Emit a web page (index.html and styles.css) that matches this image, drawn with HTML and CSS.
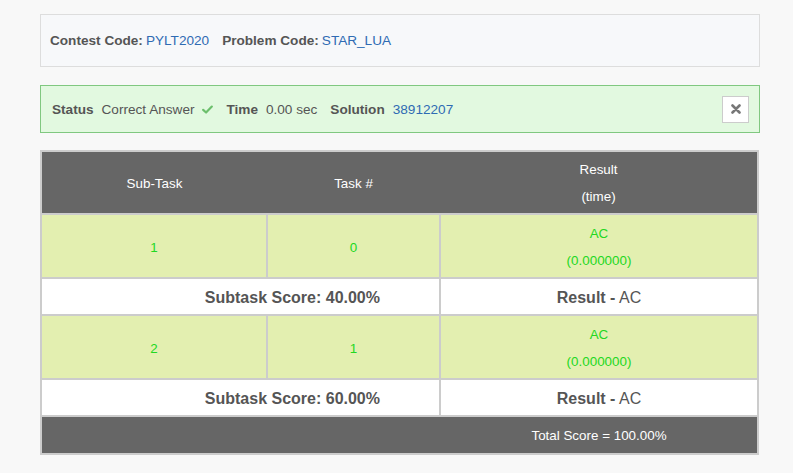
FILE: index.html
```html
<!DOCTYPE html>
<html>
<head>
<meta charset="utf-8">
<link rel="stylesheet" href="styles.css">
</head>
<body>
<div class="page">
  <div class="info-box">
    <span class="label">Contest Code:</span> <a class="val">PYLT2020</a>
    <span class="label gap">Problem Code:</span> <a class="val">STAR_LUA</a>
  </div>
  <div class="status-box">
    <div class="status-text">
      <span class="label">Status</span>
      <span class="plain">Correct Answer</span>
      <svg class="check" width="11" height="9" viewBox="0 0 12 10"><path d="M1.2 5.4 L4.4 8.4 L10.8 1.8" fill="none" stroke="#6cbf6c" stroke-width="2.4" stroke-linecap="round" stroke-linejoin="round"/></svg>
      <span class="label gap">Time</span>
      <span class="plain">0.00 sec</span>
      <span class="label gap">Solution</span>
      <a class="val">38912207</a>
    </div>
    <button class="close" type="button">
      <svg width="10" height="10" viewBox="0 0 10 10"><path d="M1.5 1.5 L8.5 8.5 M8.5 1.5 L1.5 8.5" stroke="#777" stroke-width="2.6" stroke-linecap="round"/></svg>
    </button>
  </div>
  <table class="results">
    <colgroup>
      <col class="c1"><col class="c2"><col class="c3">
    </colgroup>
    <thead>
      <tr><th>Sub-Task</th><th>Task #</th><th>Result<br>(time)</th></tr>
    </thead>
    <tbody>
      <tr class="task"><td>1</td><td>0</td><td>AC<br>(0.000000)</td></tr>
      <tr class="sub"><td colspan="2" class="score">Subtask Score: 40.00%</td><td><b>Result -</b> AC</td></tr>
      <tr class="task"><td>2</td><td>1</td><td>AC<br>(0.000000)</td></tr>
      <tr class="sub"><td colspan="2" class="score">Subtask Score: 60.00%</td><td><b>Result -</b> AC</td></tr>
      <tr class="total"><td colspan="2" class="blank"></td><td>Total Score = 100.00%</td></tr>
    </tbody>
  </table>
</div>
</body>
</html>
```
FILE: styles.css
```css
html, body {
  margin: 0;
  background: #f8f8f8;
}
body {
  font-family: "Liberation Sans", Arial, sans-serif;
  font-size: 13.6px;
  color: #555;
}
.page {
  width: 720px;
  padding: 14px 0 0 40px;
}
.info-box {
  height: 51px;
  border: 1px solid #ddd;
  background: #f7f8fa;
  padding: 0 9px;
  display: flex;
  align-items: center;
  gap: 3px;
}
.label {
  font-weight: bold;
  color: #555;
}
.gap {
  margin-left: 10px;
}
.val {
  color: #2f6bb3;
}
.plain {
  color: #555;
}
.status-box {
  margin-top: 18px;
  height: 46px;
  border: 1px solid #80c880;
  background: #e2f9e0;
  display: flex;
  align-items: center;
  justify-content: space-between;
  padding: 0 10px 0 11px;
}
.status-text {
  display: flex;
  align-items: center;
  gap: 8px;
}
.status-text .gap {
  margin-left: 5px;
}
.check {
  margin-left: 0;
}
.close {
  width: 27px;
  height: 27px;
  border: 1px solid #ccc;
  background: #fff;
  padding: 0;
  display: flex;
  align-items: center;
  justify-content: center;
}
.results {
  margin-top: 17px;
  width: 719px;
  border-collapse: collapse;
  border: 2px solid #ccc;
  text-align: center;
  line-height: 27px;
  font-size: 13.4px;
}
.c1 { width: 226px; }
.c2 { width: 173px; }
.results td {
  border: 2px solid #ccc;
}
.results th {
  background: #666;
  color: #fff;
  font-weight: normal;
  padding: 4px 4px 3px;
  border-top: 2px solid #ccc;
  border-bottom: 2px solid #ccc;
}
.task td {
  background: #e3efb0;
  color: #22d822;
  padding: 5px 4px 3px;
}
.sub td {
  background: #fff;
  color: #555;
  font-size: 16px;
  padding: 5px 4px 3px;
}
.sub b {
  font-weight: bold;
}
.sub .score {
  font-weight: bold;
  text-align: right;
  padding-right: 59px;
}
.total td {
  background: #666;
  color: #fff;
  padding: 5px 4px 4px;
}
.total .blank {
  border-right-color: #666;
}
```
